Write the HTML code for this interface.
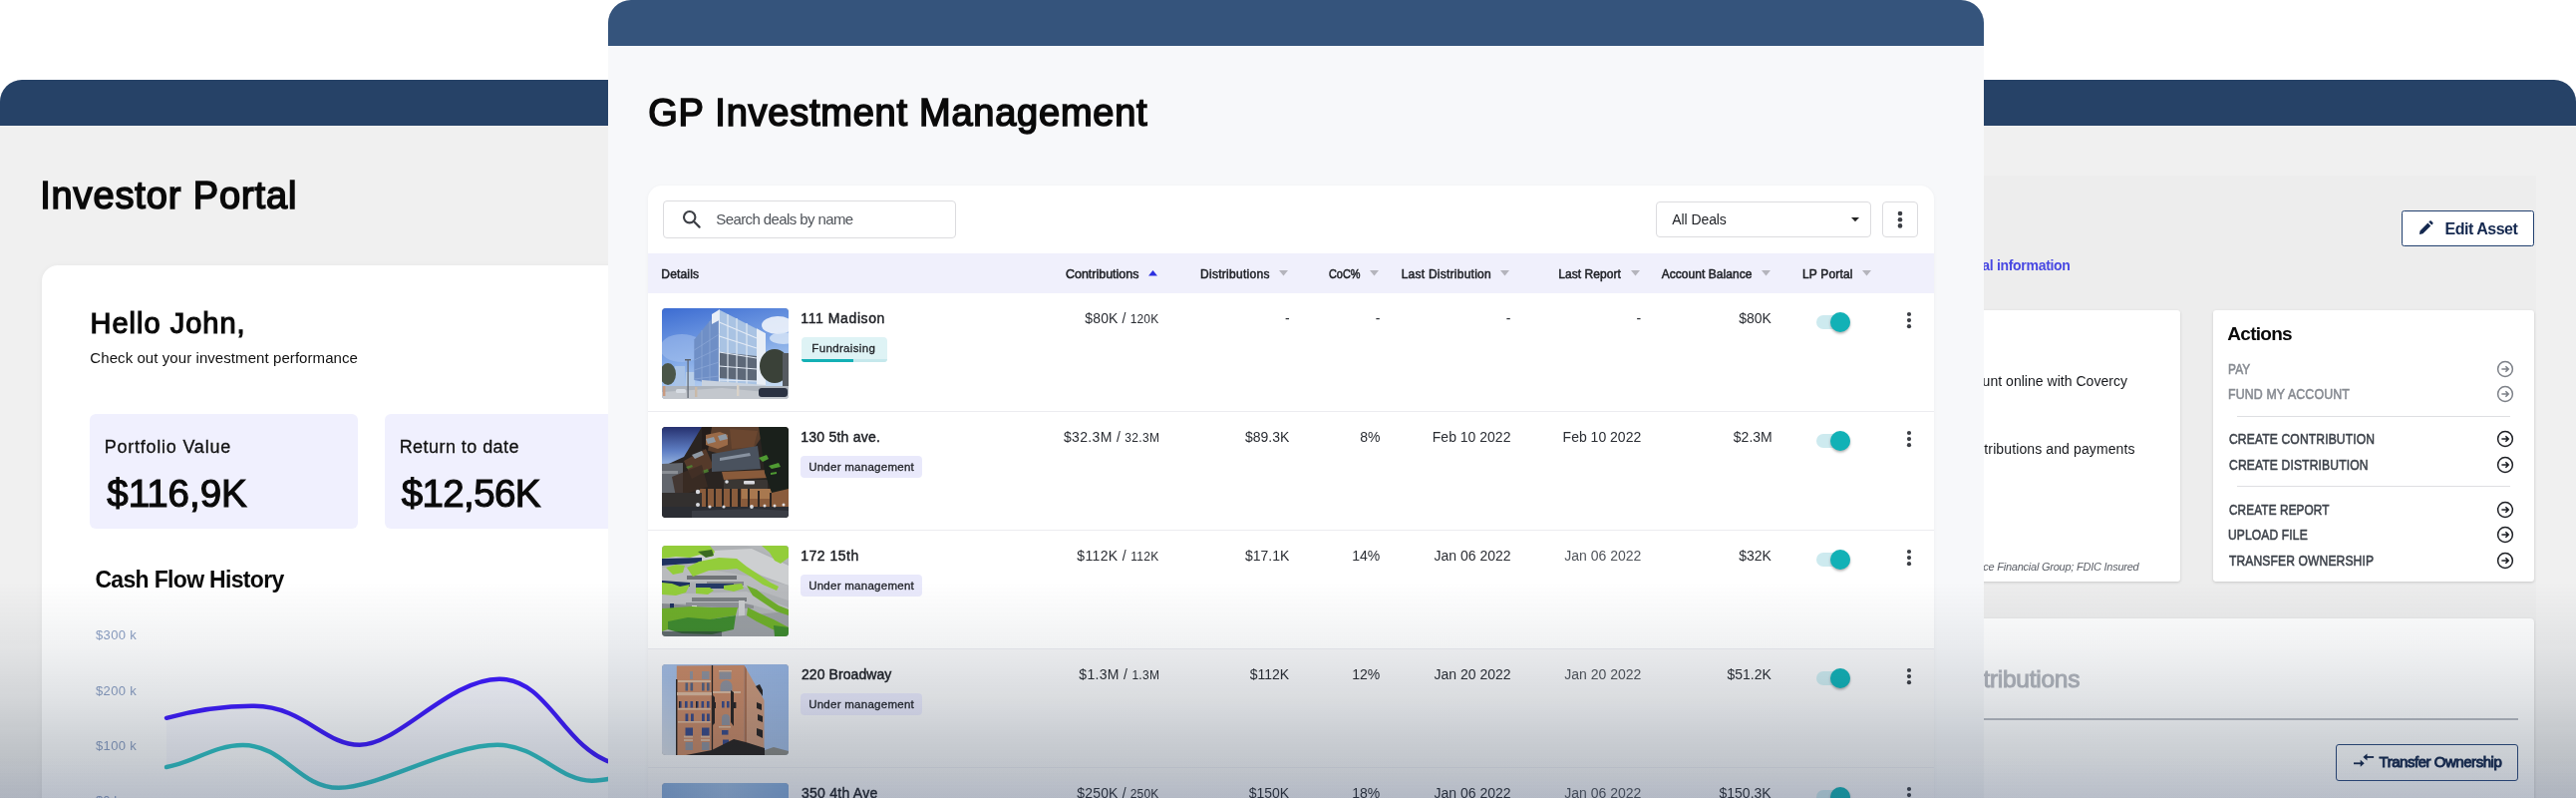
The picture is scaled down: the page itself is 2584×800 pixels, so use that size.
<!DOCTYPE html>
<html><head><meta charset="utf-8"><title>Covercy</title>
<style>
html,body{margin:0;padding:0;background:#fff;}
body{width:2584px;height:800px;overflow:hidden;position:relative;font-family:'Liberation Sans', sans-serif;-webkit-font-smoothing:antialiased;}
#root{position:absolute;left:0;top:0;width:2584px;height:800px;overflow:hidden;will-change:transform;}
#root span{display:block;}
.fd{position:absolute;pointer-events:none;}
</style></head><body><div id="root">
<!-- left: investor portal -->
<div style="position:absolute;left:0px;top:80px;width:700px;height:730px;background:#f0f0f0;border-radius:22px 0 0 0;"></div>
<div style="position:absolute;left:0px;top:80px;width:700px;height:46px;background:#264267;border-radius:22px 0 0 0;"></div>
<span style="position:absolute;left:40.13px;top:177.43px;font-size:38px;line-height:38px;color:#0a0a0a;white-space:pre;letter-spacing:0.874px;-webkit-text-stroke:1.6px #0a0a0a;">Investor Portal</span>
<div style="position:absolute;left:42px;top:266px;width:700px;height:560px;background:#fff;border-radius:16px 0 0 0;box-shadow:0 1px 6px rgba(0,0,0,.05);"></div>
<span style="position:absolute;left:90.53px;top:310.25px;font-size:29px;line-height:29px;color:#0a0a0a;white-space:pre;letter-spacing:1.007px;-webkit-text-stroke:1.2px #0a0a0a;">Hello John,</span>
<span style="position:absolute;left:90.33px;top:351.30px;font-size:15px;line-height:15px;color:#111;white-space:pre;letter-spacing:0.073px;">Check out your investment performance</span>
<div style="position:absolute;left:90px;top:415px;width:269px;height:115px;background:#f0f0fe;border-radius:6px;"></div>
<div style="position:absolute;left:386px;top:415px;width:269px;height:115px;background:#f0f0fe;border-radius:6px;"></div>
<span style="position:absolute;left:104.67px;top:439.26px;font-size:18px;line-height:18px;color:#111;white-space:pre;letter-spacing:0.774px;-webkit-text-stroke:0.3px #111;">Portfolio Value</span>
<span style="position:absolute;left:107.33px;top:476.21px;font-size:38.5px;line-height:38.5px;color:#0a0a0a;white-space:pre;letter-spacing:-0.028px;-webkit-text-stroke:1.15px #0a0a0a;">$116,9K</span>
<span style="position:absolute;left:400.67px;top:439.26px;font-size:18px;line-height:18px;color:#111;white-space:pre;letter-spacing:0.446px;-webkit-text-stroke:0.3px #111;">Return to date</span>
<span style="position:absolute;left:402.83px;top:476.21px;font-size:38.5px;line-height:38.5px;color:#0a0a0a;white-space:pre;letter-spacing:-0.656px;-webkit-text-stroke:1.15px #0a0a0a;">$12,56K</span>
<span style="position:absolute;left:95.40px;top:570.03px;font-size:23px;line-height:23px;color:#0a0a0a;white-space:pre;font-weight:700;letter-spacing:-0.671px;">Cash Flow History</span>
<span style="position:absolute;left:96.07px;top:630.30px;font-size:13px;line-height:13px;color:#8da0c4;white-space:pre;letter-spacing:0.327px;">$300 k</span>
<span style="position:absolute;left:96.07px;top:685.60px;font-size:13px;line-height:13px;color:#8da0c4;white-space:pre;letter-spacing:0.327px;">$200 k</span>
<span style="position:absolute;left:96.07px;top:740.80px;font-size:13px;line-height:13px;color:#8da0c4;white-space:pre;letter-spacing:0.327px;">$100 k</span>
<span style="position:absolute;left:96.07px;top:796.00px;font-size:13px;line-height:13px;color:#8da0c4;white-space:pre;">$0 k</span>
<svg style="position:absolute;left:0;top:600px" width="700" height="200" viewBox="0 600 700 200">
<path d="M167 719.8 C200 711,225 707.5,255 707.8 C305 708.3,325 746.8,360.8 746.8 C400 746.8,450 680.7,501 680.7 C550 680.7,565 750,615 765 L615 782 C600 783,597 782.7,593.7 782.7 C560 782.7,540 746.8,499 746.8 C450 746.8,380 789.8,339.7 789.8 C300 789.8,285 747,243.6 747 C215 747,195 764,167 769 Z" fill="#4a3fe0" fill-opacity=".03"/>
<path d="M167 719.8 C200 711,225 707.5,255 707.8 C305 708.3,325 746.8,360.8 746.8 C400 746.8,450 680.7,501 680.7 C550 680.7,565 750,615 765" fill="none" stroke="#3f1aff" stroke-width="4.4" stroke-linecap="round"/>
<path d="M167 769 C195 764,215 747,243.6 747 C285 747,300 789.8,339.7 789.8 C380 789.8,450 746.8,499 746.8 C540 746.8,560 782.7,593.7 782.7 C597 782.7,605 782,615 780" fill="none" stroke="#30c3c6" stroke-width="4.4" stroke-linecap="round"/>
</svg>
<!-- right: asset page -->
<div style="position:absolute;left:1900px;top:80px;width:684px;height:730px;background:#f0f0f0;border-radius:0 22px 0 0;"></div>
<div style="position:absolute;left:1900px;top:80px;width:684px;height:46px;background:#264267;border-radius:0 22px 0 0;"></div>
<div style="position:absolute;left:1900px;top:176px;width:644px;height:640px;background:#ededed;"></div>
<div style="position:absolute;left:2409px;top:211px;width:133px;height:36.4px;background:#fff;box-sizing:border-box;border:1.5px solid #22406f;border-radius:2.5px;"></div>
<svg style="position:absolute;left:2426.3px;top:220.6px" width="15" height="15" viewBox="0 0 16 16"><path d="M1 14.8l.6-3.7L10 2.7l3.1 3.1-8.4 8.4zM11 1.7l1.2-1.2c.4-.4 1-.4 1.4 0l1.7 1.7c.4.4.4 1 0 1.4l-1.2 1.2z" fill="#14284f"/></svg>
<span style="position:absolute;left:2452.60px;top:221.76px;font-size:16px;line-height:16px;color:#14284f;white-space:pre;font-weight:700;letter-spacing:-0.496px;">Edit Asset</span>
<span style="position:absolute;left:1988.27px;top:258.75px;font-size:14px;line-height:14px;color:#4848e2;white-space:pre;font-weight:700;letter-spacing:-0.303px;">al information</span>
<div style="position:absolute;left:1900px;top:311.3px;width:287.2px;height:271.5px;background:#fff;box-shadow:0 1px 3px rgba(0,0,0,.16);border-radius:3px;"></div>
<span style="position:absolute;left:1988.60px;top:374.75px;font-size:14px;line-height:14px;color:#16181c;white-space:pre;letter-spacing:0.029px;">unt online with Covercy</span>
<span style="position:absolute;left:1990.37px;top:442.55px;font-size:14px;line-height:14px;color:#16181c;white-space:pre;letter-spacing:0.114px;">tributions and payments</span>
<span style="position:absolute;left:1989.27px;top:563.29px;font-size:11px;line-height:11px;color:#5a5e66;white-space:pre;letter-spacing:-0.238px;font-style:italic;">ce Financial Group; FDIC Insured</span>
<div style="position:absolute;left:2219.6px;top:311.3px;width:322.6px;height:271.5px;background:#fff;box-shadow:0 1px 3px rgba(0,0,0,.16);border-radius:3px;"></div>
<span style="position:absolute;left:2234.33px;top:324.52px;font-size:19px;line-height:19px;color:#0a0a0a;white-space:pre;font-weight:700;letter-spacing:-0.722px;">Actions</span>
<span style="position:absolute;left:2235.15px;top:362.75px;font-size:14px;line-height:14px;color:#878b92;white-space:pre;letter-spacing:0.150px;-webkit-text-stroke:0.55px #878b92;transform:scaleX(0.8487);transform-origin:0 0;">PAY</span>
<svg style="position:absolute;left:2504.3px;top:360.6px" width="18" height="18" viewBox="0 0 18 18"><circle cx="9" cy="9" r="7.4" fill="none" stroke="#7d8188" stroke-width="1.5"/><path d="M5.4 9H12M9.4 6.2L12.2 9L9.4 11.8" fill="none" stroke="#7d8188" stroke-width="1.6" stroke-linejoin="miter"/></svg>
<span style="position:absolute;left:2235.12px;top:388.35px;font-size:14px;line-height:14px;color:#878b92;white-space:pre;letter-spacing:0.150px;-webkit-text-stroke:0.55px #878b92;transform:scaleX(0.8832);transform-origin:0 0;">FUND MY ACCOUNT</span>
<svg style="position:absolute;left:2504.3px;top:386.2px" width="18" height="18" viewBox="0 0 18 18"><circle cx="9" cy="9" r="7.4" fill="none" stroke="#7d8188" stroke-width="1.5"/><path d="M5.4 9H12M9.4 6.2L12.2 9L9.4 11.8" fill="none" stroke="#7d8188" stroke-width="1.6" stroke-linejoin="miter"/></svg>
<span style="position:absolute;left:2235.71px;top:433.15px;font-size:14px;line-height:14px;color:#3f444c;white-space:pre;letter-spacing:0.150px;-webkit-text-stroke:0.55px #3f444c;transform:scaleX(0.8648);transform-origin:0 0;">CREATE CONTRIBUTION</span>
<svg style="position:absolute;left:2504.3px;top:431px" width="18" height="18" viewBox="0 0 18 18"><circle cx="9" cy="9" r="7.4" fill="none" stroke="#1d1f24" stroke-width="1.5"/><path d="M5.4 9H12M9.4 6.2L12.2 9L9.4 11.8" fill="none" stroke="#1d1f24" stroke-width="1.6" stroke-linejoin="miter"/></svg>
<span style="position:absolute;left:2235.71px;top:458.95px;font-size:14px;line-height:14px;color:#3f444c;white-space:pre;letter-spacing:0.150px;-webkit-text-stroke:0.55px #3f444c;transform:scaleX(0.8656);transform-origin:0 0;">CREATE DISTRIBUTION</span>
<svg style="position:absolute;left:2504.3px;top:456.8px" width="18" height="18" viewBox="0 0 18 18"><circle cx="9" cy="9" r="7.4" fill="none" stroke="#1d1f24" stroke-width="1.5"/><path d="M5.4 9H12M9.4 6.2L12.2 9L9.4 11.8" fill="none" stroke="#1d1f24" stroke-width="1.6" stroke-linejoin="miter"/></svg>
<span style="position:absolute;left:2235.72px;top:503.75px;font-size:14px;line-height:14px;color:#3f444c;white-space:pre;letter-spacing:0.150px;-webkit-text-stroke:0.55px #3f444c;transform:scaleX(0.8405);transform-origin:0 0;">CREATE REPORT</span>
<svg style="position:absolute;left:2504.3px;top:501.6px" width="18" height="18" viewBox="0 0 18 18"><circle cx="9" cy="9" r="7.4" fill="none" stroke="#1d1f24" stroke-width="1.5"/><path d="M5.4 9H12M9.4 6.2L12.2 9L9.4 11.8" fill="none" stroke="#1d1f24" stroke-width="1.6" stroke-linejoin="miter"/></svg>
<span style="position:absolute;left:2235.43px;top:529.35px;font-size:14px;line-height:14px;color:#3f444c;white-space:pre;letter-spacing:0.150px;-webkit-text-stroke:0.55px #3f444c;transform:scaleX(0.8618);transform-origin:0 0;">UPLOAD FILE</span>
<svg style="position:absolute;left:2504.3px;top:527.2px" width="18" height="18" viewBox="0 0 18 18"><circle cx="9" cy="9" r="7.4" fill="none" stroke="#1d1f24" stroke-width="1.5"/><path d="M5.4 9H12M9.4 6.2L12.2 9L9.4 11.8" fill="none" stroke="#1d1f24" stroke-width="1.6" stroke-linejoin="miter"/></svg>
<span style="position:absolute;left:2236.00px;top:555.15px;font-size:14px;line-height:14px;color:#3f444c;white-space:pre;letter-spacing:0.150px;-webkit-text-stroke:0.55px #3f444c;transform:scaleX(0.8618);transform-origin:0 0;">TRANSFER OWNERSHIP</span>
<svg style="position:absolute;left:2504.3px;top:553px" width="18" height="18" viewBox="0 0 18 18"><circle cx="9" cy="9" r="7.4" fill="none" stroke="#1d1f24" stroke-width="1.5"/><path d="M5.4 9H12M9.4 6.2L12.2 9L9.4 11.8" fill="none" stroke="#1d1f24" stroke-width="1.6" stroke-linejoin="miter"/></svg>
<div style="position:absolute;left:2244px;top:417px;width:274px;height:1px;background:#dedfe2;"></div>
<div style="position:absolute;left:2244px;top:487px;width:274px;height:1px;background:#dedfe2;"></div>
<div style="position:absolute;left:1900px;top:619.7px;width:641.8px;height:200px;background:#fff;border-radius:4px;box-shadow:0 1px 3px rgba(0,0,0,.12);"></div>
<span style="position:absolute;left:1989.40px;top:668.76px;font-size:24.5px;line-height:24.5px;color:#b2b5bc;white-space:pre;letter-spacing:-0.267px;-webkit-text-stroke:1.0px #b2b5bc;">tributions</span>
<div style="position:absolute;left:1900px;top:720px;width:625.5px;height:1.6px;background:#b9bcc3;"></div>
<div style="position:absolute;left:2343px;top:745.8px;width:182.5px;height:37px;background:rgba(255,255,255,.12);box-sizing:border-box;border:1.5px solid #2c4a7e;border-radius:3px;"></div>
<svg style="position:absolute;left:2360px;top:754px" width="22" height="17" viewBox="0 0 22 17"><g fill="#14284f"><rect x="1" y="10.4" width="7.5" height="1.8"/><polygon points="7.7,7.8 11.7,11.3 7.7,14.8"/><rect x="13.8" y="4.1" width="7.3" height="1.8"/><polygon points="14.5,1.5 10.4,5 14.5,8.5"/></g></svg>
<span style="position:absolute;left:2386.60px;top:755.80px;font-size:15px;line-height:15px;color:#14284f;white-space:pre;letter-spacing:-0.471px;-webkit-text-stroke:0.95px #14284f;">Transfer Ownership</span>
<!-- center: GP investment management -->
<div style="position:absolute;left:610px;top:0px;width:1380px;height:810px;background:#f7f8fa;border-radius:23px 23px 0 0;"></div>
<div style="position:absolute;left:610px;top:0px;width:1380px;height:46px;background:#35547c;border-radius:23px 23px 0 0;"></div>
<span style="position:absolute;left:650.30px;top:94.03px;font-size:38px;line-height:38px;color:#0a0a0a;white-space:pre;letter-spacing:0.754px;-webkit-text-stroke:1.6px #0a0a0a;">GP Investment Management</span>
<div style="position:absolute;left:650px;top:186px;width:1290px;height:640px;background:#fff;border-radius:14px 14px 0 0;box-shadow:0 1px 5px rgba(0,0,0,.04);"></div>
<div style="position:absolute;left:665px;top:201px;width:294px;height:38px;background:#fff;box-sizing:border-box;border:1px solid #dcdcdf;border-radius:4px;"></div>
<svg style="position:absolute;left:684px;top:210px" width="20" height="20" viewBox="0 0 20 20"><circle cx="7.7" cy="7.7" r="5.7" fill="none" stroke="#3c3f45" stroke-width="2.1"/><path d="M12 12L17.6 17.6" stroke="#3c3f45" stroke-width="2.2" stroke-linecap="round"/></svg>
<span style="position:absolute;left:718.33px;top:211.70px;font-size:15px;line-height:15px;color:#50545a;white-space:pre;letter-spacing:-0.600px;">Search deals by name</span>
<div style="position:absolute;left:1661px;top:202px;width:216px;height:36px;background:#fff;box-sizing:border-box;border:1px solid #dcdcdf;border-radius:4px;"></div>
<span style="position:absolute;left:1677.30px;top:213.15px;font-size:14px;line-height:14px;color:#1d1f24;white-space:pre;letter-spacing:-0.083px;">All Deals</span>
<svg style="position:absolute;left:1856.5px;top:218.2px" width="8" height="4.2" viewBox="0 0 8 4.2"><polygon points="0,0 8,0 4,4.2" fill="#222"/></svg>
<div style="position:absolute;left:1888px;top:202px;width:36px;height:36px;background:#fff;box-sizing:border-box;border:1px solid #dcdcdf;border-radius:4px;"></div>
<svg style="position:absolute;left:1901.7px;top:209.8px" width="8" height="20.4" viewBox="0 0 8 20.4"><circle cx="4" cy="4.0" r="2.3" fill="#3c3f45"/><circle cx="4" cy="10.2" r="2.3" fill="#3c3f45"/><circle cx="4" cy="16.4" r="2.3" fill="#3c3f45"/></svg>
<div style="position:absolute;left:650px;top:254px;width:1290px;height:40.3px;background:#f0f0fc;"></div>
<span style="position:absolute;left:663.33px;top:269.14px;font-size:12px;line-height:12px;color:#1d1f24;white-space:pre;letter-spacing:0.167px;-webkit-text-stroke:0.5px #1d1f24;">Details</span>
<span style="position:absolute;left:1069.05px;top:269.14px;font-size:12px;line-height:12px;color:#1d1f24;white-space:pre;-webkit-text-stroke:0.5px #1d1f24;transform:scaleX(1.0379);transform-origin:0 0;">Contributions</span>
<svg style="position:absolute;left:1151.7px;top:271.4px" width="9" height="5.5" viewBox="0 0 9 5.5"><polygon points="0,5.5 9,5.5 4.5,0" fill="#2b2fe0"/></svg>
<span style="position:absolute;left:1204.03px;top:269.14px;font-size:12px;line-height:12px;color:#1d1f24;white-space:pre;letter-spacing:0.281px;-webkit-text-stroke:0.5px #1d1f24;">Distributions</span>
<svg style="position:absolute;left:1283px;top:271.4px" width="9" height="5.5" viewBox="0 0 9 5.5"><polygon points="0,0 9,0 4.5,5.5" fill="#b4b4bc"/></svg>
<span style="position:absolute;left:1332.50px;top:269.14px;font-size:12px;line-height:12px;color:#1d1f24;white-space:pre;-webkit-text-stroke:0.5px #1d1f24;transform:scaleX(0.9087);transform-origin:0 0;">CoC%</span>
<svg style="position:absolute;left:1373.5px;top:271.4px" width="9" height="5.5" viewBox="0 0 9 5.5"><polygon points="0,0 9,0 4.5,5.5" fill="#b4b4bc"/></svg>
<span style="position:absolute;left:1405.63px;top:269.14px;font-size:12px;line-height:12px;color:#1d1f24;white-space:pre;letter-spacing:0.250px;-webkit-text-stroke:0.5px #1d1f24;">Last Distribution</span>
<svg style="position:absolute;left:1504.5px;top:271.4px" width="9" height="5.5" viewBox="0 0 9 5.5"><polygon points="0,0 9,0 4.5,5.5" fill="#b4b4bc"/></svg>
<span style="position:absolute;left:1563.33px;top:269.14px;font-size:12px;line-height:12px;color:#1d1f24;white-space:pre;letter-spacing:0.053px;-webkit-text-stroke:0.5px #1d1f24;">Last Report</span>
<svg style="position:absolute;left:1635.6px;top:271.4px" width="9" height="5.5" viewBox="0 0 9 5.5"><polygon points="0,0 9,0 4.5,5.5" fill="#b4b4bc"/></svg>
<span style="position:absolute;left:1666.73px;top:269.14px;font-size:12px;line-height:12px;color:#1d1f24;white-space:pre;letter-spacing:0.048px;-webkit-text-stroke:0.5px #1d1f24;">Account Balance</span>
<svg style="position:absolute;left:1767px;top:271.4px" width="9" height="5.5" viewBox="0 0 9 5.5"><polygon points="0,0 9,0 4.5,5.5" fill="#b4b4bc"/></svg>
<span style="position:absolute;left:1807.93px;top:269.14px;font-size:12px;line-height:12px;color:#1d1f24;white-space:pre;letter-spacing:0.175px;-webkit-text-stroke:0.5px #1d1f24;">LP Portal</span>
<svg style="position:absolute;left:1867.5px;top:271.4px" width="9" height="5.5" viewBox="0 0 9 5.5"><polygon points="0,0 9,0 4.5,5.5" fill="#b4b4bc"/></svg>
<div style="position:absolute;left:650px;top:412px;width:1290px;height:1px;background:#ececf0;"></div>
<div style="position:absolute;left:664px;top:308.8px;width:127px;height:91px;border-radius:4px;overflow:hidden;background:#999"><svg width="127" height="91" viewBox="0 0 127 91" style="display:block"><defs><linearGradient id="s1" x1="0" y1="0" x2="0.3" y2="1"><stop offset="0" stop-color="#3c6cd2"/><stop offset=".55" stop-color="#7ea6e6"/><stop offset="1" stop-color="#c3d9f3"/></linearGradient></defs>
<rect width="127" height="91" fill="url(#s1)"/>
<ellipse cx="116" cy="17" rx="16" ry="9" fill="#eef3fb" opacity=".9"/><ellipse cx="122" cy="30" rx="14" ry="6" fill="#dbe7f7" opacity=".8"/><ellipse cx="20" cy="40" rx="22" ry="14" fill="#a9c4ee" opacity=".5"/>
<rect x="13" y="58" width="10" height="20" fill="#a9c3e6"/><rect x="24" y="64" width="9" height="14" fill="#b9cfe9"/>
<polygon points="57.4,1.5 32.3,31.6 32.3,72 57.4,77" fill="#6f8fc6"/>
<polygon points="57.4,1.5 50,6 50,16 57.4,12" fill="#e9eef6"/>
<polygon points="57.4,1.5 104,25.3 104,77 57.4,83" fill="#a9c3e3"/>
<polygon points="58,44 95,48 95,73 58,70" fill="#5d6878"/>
<polygon points="95,20.3 104,25.3 104,77 95,77" fill="#e8eef6"/>
<g stroke="#e4ebf5" stroke-width="1.1" fill="none"><path d="M57.4 1.5V83M66 6V81M75 10V80M85 15V79"/><path d="M57.4 14L95 30M57.4 28L95 40M57.4 44L95 50M57.4 58L95 61M57.4 72L95 73"/></g>
<g stroke="#8aa6d6" stroke-width=".8" fill="none"><path d="M32.3 42L57.4 26M32.3 52L57.4 40M32.3 62L57.4 54M32.3 71L57.4 68M40 22V73M48 13V75"/></g>
<polygon points="40,72 104,77 104,84 40,80" fill="#c9d2de"/>
<ellipse cx="113" cy="58" rx="15" ry="17" fill="#3a4138"/><ellipse cx="6" cy="66" rx="8" ry="11" fill="#4b5649"/>
<rect x="121" y="45" width="6" height="33" fill="#555a60"/>
<rect x="0" y="78" width="127" height="13" fill="#aeb4bc"/>
<polygon points="0,84 60,80 127,86 127,91 0,91" fill="#c3c7cd"/>
<rect x="97" y="80" width="29" height="9" rx="3" fill="#2b3242"/><rect x="14" y="81" width="10" height="4" rx="1.5" fill="#d8dde4"/>
<rect x="25.5" y="52" width="1.2" height="38" fill="#5a616b"/><rect x="23" y="51" width="6" height="1.5" fill="#5a616b"/>
<rect x="33" y="79" width="2.4" height="10" fill="#c9b9a8"/><rect x="75" y="77" width="2.4" height="11" fill="#d9d2c8"/><rect x="1" y="78" width="2.4" height="10" fill="#c99a80"/></svg></div>
<span style="position:absolute;left:803.30px;top:312.25px;font-size:14px;line-height:14px;color:#1d1f24;white-space:pre;letter-spacing:0.597px;-webkit-text-stroke:0.45px #1d1f24;">111 Madison</span>
<div style="position:absolute;left:803.5px;top:338px;width:86.5px;height:25px;background:#def3f5;border-radius:4px;overflow:hidden;"></div>
<div style="position:absolute;left:803.5px;top:360px;width:86.5px;height:3px;background:#c5e8ec;border-radius:0 0 4px 4px;"></div>
<div style="position:absolute;left:803.5px;top:360px;width:52px;height:3px;background:#14b0b5;border-radius:0 0 0 4px;"></div>
<span style="position:absolute;left:814.33px;top:344.27px;font-size:11.5px;line-height:11.5px;color:#1d1f24;white-space:pre;letter-spacing:0.350px;-webkit-text-stroke:0.3px #1d1f24;">Fundraising</span>
<span style="position:absolute;left:1088.33px;top:311.55px;font-size:14px;line-height:14px;color:#2a2d33;white-space:pre;letter-spacing:0.140px;">$80K / <b style="font-weight:400;font-size:12px">120K</b></span>
<span style="position:absolute;left:1289.00px;top:311.55px;font-size:14px;line-height:14px;color:#2a2d33;white-space:pre;">-</span>
<span style="position:absolute;left:1379.80px;top:311.55px;font-size:14px;line-height:14px;color:#2a2d33;white-space:pre;">-</span>
<span style="position:absolute;left:1510.80px;top:311.55px;font-size:14px;line-height:14px;color:#2a2d33;white-space:pre;">-</span>
<span style="position:absolute;left:1641.60px;top:311.55px;font-size:14px;line-height:14px;color:#2a2d33;white-space:pre;">-</span>
<span style="position:absolute;left:1744.17px;top:311.55px;font-size:14px;line-height:14px;color:#2a2d33;white-space:pre;">$80K</span>
<div style="position:absolute;left:1822px;top:316.25px;width:34px;height:13.5px;background:#cdeaef;border-radius:7px;"></div><div style="position:absolute;left:1836.3px;top:313px;width:20px;height:20px;background:#12b1b6;border-radius:50%;box-shadow:0 1.5px 2.5px rgba(0,0,0,.3);"></div>
<svg style="position:absolute;left:1911px;top:310.9px" width="8" height="20.2" viewBox="0 0 8 20.2"><circle cx="4" cy="4.0" r="2.1" fill="#3c3f45"/><circle cx="4" cy="10.1" r="2.1" fill="#3c3f45"/><circle cx="4" cy="16.2" r="2.1" fill="#3c3f45"/></svg>
<div style="position:absolute;left:650px;top:531px;width:1290px;height:1px;background:#ececf0;"></div>
<div style="position:absolute;left:664px;top:427.8px;width:127px;height:91px;border-radius:4px;overflow:hidden;background:#999"><svg width="127" height="91" viewBox="0 0 127 91" style="display:block"><defs><linearGradient id="s2" x1="0" y1="0" x2="0" y2="1"><stop offset="0" stop-color="#26316f"/><stop offset=".6" stop-color="#5f7fc4"/><stop offset="1" stop-color="#9bb8e2"/></linearGradient></defs>
<rect width="127" height="91" fill="#2a2421"/>
<polygon points="0,0 40,0 22,30 0,40" fill="url(#s2)"/>
<polygon points="0,37 21,36 21,66 0,66" fill="#62666d"/><rect x="0" y="44" width="16" height="3" fill="#8a8e94"/>
<polygon points="40,0 98,0 100,10 92,22 62,28 40,22" fill="#5a3e2c"/><polygon points="40,0 50,0 46,24 40,22" fill="#241d1a"/><polygon points="68,2 96,4 92,20 70,22" fill="#6b4730"/>
<polygon points="44,8 58,5 66,8 66,18 56,22 44,18" fill="#9a6a47"/><polygon points="56,9 64,7 66,12 58,14" fill="#8e99a4"/><polygon points="44,12 52,10 54,15 46,17" fill="#8e99a4"/>
<polygon points="22,34 44,22 52,40 30,52" fill="#553a2a"/><polygon points="30,28 40,24 42,28 33,32" fill="#8e99a4"/>
<polygon points="50,27 96,19 99,42 50,45" fill="#4a525e"/><polygon points="58,31 88,26 89,29 58,34" fill="#8892a0"/>
<polygon points="60,45 107,43 107,51 62,53" fill="#8a5b3b"/>
<rect x="38" y="62" width="89" height="18" fill="#8a5c3c"/><rect x="80" y="62" width="30" height="10" fill="#a8784f"/>
<g fill="#2a2421"><rect x="44" y="62" width="2" height="18"/><rect x="52" y="62" width="2" height="18"/><rect x="60" y="62" width="2" height="18"/><rect x="68" y="62" width="2" height="18"/><rect x="76" y="62" width="3" height="18"/><rect x="86" y="62" width="2" height="18"/><rect x="96" y="64" width="2" height="16"/><rect x="108" y="66" width="2" height="14"/></g>
<rect x="62" y="53" width="44" height="9" fill="#3a3633"/><rect x="82" y="54" width="11" height="3.4" rx="1" fill="#d8d8dc"/>
<polygon points="97,0 127,0 127,62 110,66 103,46 100,20" fill="#1a201b"/>
<path d="M97 31l8-3 2 4-6 3zM107 39l10-3 2 4-9 2zM109 46l6-1v2l-6 1z" fill="#4f9a32"/>
<path d="M40 44l6-2 1 3-6 2zM24 40l6-2 1 2-5 2z" fill="#4f8a32" opacity=".8"/>
<polygon points="10,50 40,38 46,60 14,70" fill="#3d2d24" opacity=".8"/>
<rect x="0" y="66" width="40" height="14" fill="#33302f"/>
<rect x="0" y="80" width="127" height="11" fill="#2b2d33"/><polygon points="30,84 90,82 127,84 127,91 30,91" fill="#3a3d44"/>
<g fill="#e9ecf2" opacity=".9"><circle cx="36" cy="65" r="2.2"/><circle cx="65" cy="55" r="1.8"/><circle cx="48" cy="80" r="1.6"/><circle cx="62" cy="80" r="1.6"/><circle cx="90" cy="80" r="1.9"/><circle cx="103" cy="79" r="1.5"/><circle cx="113" cy="79" r="1.5"/><circle cx="122" cy="78" r="1.5"/><circle cx="36" cy="78" r="2"/></g></svg></div>
<span style="position:absolute;left:803.30px;top:431.25px;font-size:14px;line-height:14px;color:#1d1f24;white-space:pre;letter-spacing:0.227px;-webkit-text-stroke:0.45px #1d1f24;">130 5th ave.</span>
<div style="position:absolute;left:803px;top:457px;width:122px;height:22px;background:#e9e9fb;border-radius:4px;"></div>
<span style="position:absolute;left:811.13px;top:463.27px;font-size:11.5px;line-height:11.5px;color:#1d1f24;white-space:pre;letter-spacing:0.267px;-webkit-text-stroke:0.3px #1d1f24;">Under management</span>
<span style="position:absolute;left:1067.00px;top:430.55px;font-size:14px;line-height:14px;color:#2a2d33;white-space:pre;letter-spacing:0.328px;">$32.3M / <b style="font-weight:400;font-size:12px">32.3M</b></span>
<span style="position:absolute;left:1249.00px;top:430.55px;font-size:14px;line-height:14px;color:#2a2d33;white-space:pre;">$89.3K</span>
<span style="position:absolute;left:1364.13px;top:430.55px;font-size:14px;line-height:14px;color:#2a2d33;white-space:pre;">8%</span>
<span style="position:absolute;left:1436.80px;top:430.55px;font-size:14px;line-height:14px;color:#2a2d33;white-space:pre;">Feb 10 2022</span>
<span style="position:absolute;left:1567.60px;top:430.55px;font-size:14px;line-height:14px;color:#2a2d33;white-space:pre;">Feb 10 2022</span>
<span style="position:absolute;left:1738.83px;top:430.55px;font-size:14px;line-height:14px;color:#2a2d33;white-space:pre;">$2.3M</span>
<div style="position:absolute;left:1822px;top:435.25px;width:34px;height:13.5px;background:#cdeaef;border-radius:7px;"></div><div style="position:absolute;left:1836.3px;top:432px;width:20px;height:20px;background:#12b1b6;border-radius:50%;box-shadow:0 1.5px 2.5px rgba(0,0,0,.3);"></div>
<svg style="position:absolute;left:1911px;top:429.9px" width="8" height="20.2" viewBox="0 0 8 20.2"><circle cx="4" cy="4.0" r="2.1" fill="#3c3f45"/><circle cx="4" cy="10.1" r="2.1" fill="#3c3f45"/><circle cx="4" cy="16.2" r="2.1" fill="#3c3f45"/></svg>
<div style="position:absolute;left:650px;top:650px;width:1290px;height:1px;background:#ececf0;"></div>
<div style="position:absolute;left:664px;top:546.8px;width:127px;height:91px;border-radius:4px;overflow:hidden;background:#999"><svg width="127" height="91" viewBox="0 0 127 91" style="display:block"><rect width="127" height="91" fill="#aeb1b4"/>
<polygon points="0,9 50,5 90,3 127,20 127,40 100,30 80,20 50,16 0,20" fill="#cdcfd1"/>
<polygon points="85,0 127,0 127,18 100,6" fill="#b3b6b9"/>
<polygon points="0,13 40,12 40,17 0,20" fill="#1e3160"/>
<polygon points="0,22 30,22 60,26 95,32 127,40 127,55 100,46 70,38 40,36 0,38" fill="#b9bbbe"/>
<polygon points="25,30 75,30 75,34 25,34" fill="#6f7377"/><polygon points="45,36 82,36 82,40 45,40" fill="#85888c"/>
<polygon points="0,35 28,37 28,41 0,41" fill="#1e3160"/><polygon points="34,38 72,38 72,43 34,43" fill="#263a66"/>
<polygon points="0,48 30,48 85,46 100,52 127,62 127,70 100,62 85,58 0,58" fill="#bcbec1"/>
<polygon points="30,52 85,52 85,56 30,56" fill="#7b7f83"/><polygon points="24,57 78,57 92,60 92,63 24,61" fill="#8f9296"/>
<polygon points="0,58 30,60 30,64 0,64" fill="#8a8d91"/><rect x="8" y="58" width="4" height="6" fill="#1e3160"/>
<rect x="77" y="55" width="6" height="20" fill="#c9cbcd"/><rect x="30" y="60" width="5" height="8" fill="#d9dadc"/>
<polygon points="60,72 127,66 127,91 60,91" fill="#9b9fa3"/>
<g fill="#93cd3a"><path d="M0 0h48l5 6-3 5-12-2-10 3-14-1-14 2z"/><path d="M100 0h27v12l-8 6-6-3-5-8z"/><path d="M4 22l10-3 9 1-2 7-10 2z"/><path d="M25 22l12-6 20-4 18 1 10 8 12 8 12 8 8 4-2 4-14-6-12-8-14-8-10 1-18 1-16 6z"/><path d="M0 37l10 1 8 3 10-2-4 8-10 3-14-1z"/><path d="M34 42l14 0 4 3-6 4-12-1zM62 40l18-2 2 5-10 3-10-2z"/></g>
<g fill="#6fae2a"><path d="M85 40l10 4 10 8 12 8 10 4v6l-12-4-12-8-12-8z"/><path d="M0 63l30-2 20 1 26 0-2 8-20 3-22 6-20 3-12 4z"/><path d="M86 62l12 6 14 6 15 8v6l-16-4-16-8-10-6z"/></g>
<g fill="#3f8a2e"><path d="M6 76l20-4 22 2 26-4-2 14-22 5-30-1-14-4z"/><path d="M112 80l15 2v9h-14z"/></g>
<path d="M36 6l14-2 2 6-8 2z" fill="#3b6a22"/>
<rect x="0" y="86" width="60" height="5" fill="#2c3a3a" opacity=".6"/></svg></div>
<span style="position:absolute;left:803.30px;top:550.25px;font-size:14px;line-height:14px;color:#1d1f24;white-space:pre;letter-spacing:0.500px;-webkit-text-stroke:0.45px #1d1f24;">172 15th</span>
<div style="position:absolute;left:803px;top:576px;width:122px;height:22px;background:#e9e9fb;border-radius:4px;"></div>
<span style="position:absolute;left:811.13px;top:582.27px;font-size:11.5px;line-height:11.5px;color:#1d1f24;white-space:pre;letter-spacing:0.267px;-webkit-text-stroke:0.3px #1d1f24;">Under management</span>
<span style="position:absolute;left:1080.33px;top:549.55px;font-size:14px;line-height:14px;color:#2a2d33;white-space:pre;letter-spacing:0.339px;">$112K / <b style="font-weight:400;font-size:12px">112K</b></span>
<span style="position:absolute;left:1249.00px;top:549.55px;font-size:14px;line-height:14px;color:#2a2d33;white-space:pre;">$17.1K</span>
<span style="position:absolute;left:1356.13px;top:549.55px;font-size:14px;line-height:14px;color:#2a2d33;white-space:pre;">14%</span>
<span style="position:absolute;left:1438.47px;top:549.55px;font-size:14px;line-height:14px;color:#2a2d33;white-space:pre;">Jan 06 2022</span>
<span style="position:absolute;left:1569.27px;top:549.55px;font-size:14px;line-height:14px;color:#50545a;white-space:pre;">Jan 06 2022</span>
<span style="position:absolute;left:1744.17px;top:549.55px;font-size:14px;line-height:14px;color:#2a2d33;white-space:pre;">$32K</span>
<div style="position:absolute;left:1822px;top:554.25px;width:34px;height:13.5px;background:#cdeaef;border-radius:7px;"></div><div style="position:absolute;left:1836.3px;top:551px;width:20px;height:20px;background:#12b1b6;border-radius:50%;box-shadow:0 1.5px 2.5px rgba(0,0,0,.3);"></div>
<svg style="position:absolute;left:1911px;top:548.9px" width="8" height="20.2" viewBox="0 0 8 20.2"><circle cx="4" cy="4.0" r="2.1" fill="#3c3f45"/><circle cx="4" cy="10.1" r="2.1" fill="#3c3f45"/><circle cx="4" cy="16.2" r="2.1" fill="#3c3f45"/></svg>
<div style="position:absolute;left:650px;top:651px;width:1290px;height:119px;background:#f8f8f9;"></div>
<div style="position:absolute;left:650px;top:769px;width:1290px;height:1px;background:#ececf0;"></div>
<div style="position:absolute;left:664px;top:665.8px;width:127px;height:91px;border-radius:4px;overflow:hidden;background:#999"><svg width="127" height="91" viewBox="0 0 127 91" style="display:block"><defs><linearGradient id="s4" x1="1" y1="0" x2="0" y2="1"><stop offset="0" stop-color="#94b1de"/><stop offset=".55" stop-color="#a3bbe0"/><stop offset="1" stop-color="#d6dbe3"/></linearGradient></defs>
<rect width="127" height="91" fill="url(#s4)"/>
<polygon points="14.8,1.6 82.5,1 82.5,91 14.8,91" fill="#c68866"/>
<polygon points="82.5,1 102.5,36 102.5,91 82.5,91" fill="#c9977a"/>
<polygon points="82.5,1 85,5 85,91 82.5,91" fill="#a76f52"/>
<rect x="14" y="15" width="1.4" height="76" fill="#2a2422"/>
<rect x="49.8" y="1" width="1.3" height="90" fill="#2a2422"/>
<g fill="#d7b69c"><rect x="16" y="16" width="33" height="2"/><rect x="15" y="28" width="35" height="3.2"/><rect x="51" y="27" width="28" height="2"/><rect x="16" y="44" width="33" height="1.6"/><rect x="16" y="57" width="33" height="1.6"/><rect x="22" y="71.5" width="9" height="2"/><rect x="39" y="71.5" width="9" height="2"/><rect x="22" y="75" width="9" height="2"/><rect x="39" y="75" width="9" height="2"/><rect x="57" y="6" width="13" height="1.6"/><rect x="57" y="62" width="12" height="1.6"/></g>
<g fill="#8d8f9a"><rect x="28" y="7" width="3" height="8"/><rect x="40" y="7" width="7.5" height="8"/><rect x="57.5" y="7.5" width="12" height="7.5"/><path d="M58.5 27v-5a6 6 0 0 1 12 0v5z"/><path d="M60 61v-7a4 4 0 0 1 8 0v7z"/></g>
<g fill="#55617f"><rect x="23.5" y="18.5" width="2.6" height="8"/><rect x="28.5" y="18.5" width="2.6" height="8"/><rect x="40" y="18.5" width="2.6" height="8"/><rect x="45" y="18.5" width="2.6" height="8"/></g>
<g fill="#3a4a86"><rect x="17" y="37" width="2.6" height="6.5"/><rect x="23" y="37" width="2.6" height="6.5"/><rect x="28.5" y="37" width="2.6" height="6.5"/><rect x="34" y="37" width="2.6" height="6.5"/><rect x="39.5" y="37" width="2.6" height="6.5"/><rect x="45" y="37" width="2.6" height="6.5"/><rect x="60" y="37" width="2.6" height="6.5"/><rect x="65" y="37" width="2.6" height="6.5"/>
<rect x="23.5" y="49.5" width="2.8" height="7.5"/><rect x="29" y="49.5" width="2.8" height="7.5"/><rect x="40" y="49.5" width="2.8" height="7.5"/><rect x="45" y="49.5" width="2.8" height="7.5"/>
<rect x="23.5" y="63.5" width="7.5" height="8"/><rect x="40" y="63.5" width="7.5" height="8"/><rect x="60" y="66" width="6.5" height="4.6"/><rect x="61" y="75.5" width="6" height="9.5"/></g>
<g fill="#8d8f9a"><rect x="23.5" y="78" width="7.5" height="8"/><rect x="40" y="78" width="7.5" height="8"/></g>
<g fill="#2a2422"><rect x="17" y="37" width="1.2" height="6.5"/><rect x="34" y="37" width="1.4" height="6.5"/><rect x="52" y="38" width="2" height="6"/><rect x="72" y="38" width="2.4" height="6"/><path d="M50 30l3 3v26l-3 3z"/><path d="M69 26l3 2v34l-3-4z"/><path d="M94 22l4-2 3 6v6z"/><path d="M95 38l5 2v6l-5-2zM96 50l5 2v6l-5-2zM95 64l6 2v8l-6-3z"/></g>
<polygon points="24,91 50,86 72,75 84,78 103,84 103,91" fill="#2a2422"/>
<polygon points="103,86 112,83 127,87 127,91 103,91" fill="#8a8a86"/></svg></div>
<span style="position:absolute;left:803.97px;top:669.25px;font-size:14px;line-height:14px;color:#1d1f24;white-space:pre;letter-spacing:0.079px;-webkit-text-stroke:0.45px #1d1f24;">220 Broadway</span>
<div style="position:absolute;left:803px;top:695px;width:122px;height:22px;background:#e9e9fb;border-radius:4px;"></div>
<span style="position:absolute;left:811.13px;top:701.27px;font-size:11.5px;line-height:11.5px;color:#1d1f24;white-space:pre;letter-spacing:0.267px;-webkit-text-stroke:0.3px #1d1f24;">Under management</span>
<span style="position:absolute;left:1082.33px;top:668.55px;font-size:14px;line-height:14px;color:#2a2d33;white-space:pre;letter-spacing:0.309px;">$1.3M / <b style="font-weight:400;font-size:12px">1.3M</b></span>
<span style="position:absolute;left:1253.67px;top:668.55px;font-size:14px;line-height:14px;color:#2a2d33;white-space:pre;">$112K</span>
<span style="position:absolute;left:1356.13px;top:668.55px;font-size:14px;line-height:14px;color:#2a2d33;white-space:pre;">12%</span>
<span style="position:absolute;left:1438.47px;top:668.55px;font-size:14px;line-height:14px;color:#2a2d33;white-space:pre;">Jan 20 2022</span>
<span style="position:absolute;left:1569.27px;top:668.55px;font-size:14px;line-height:14px;color:#50545a;white-space:pre;">Jan 20 2022</span>
<span style="position:absolute;left:1732.50px;top:668.55px;font-size:14px;line-height:14px;color:#2a2d33;white-space:pre;">$51.2K</span>
<div style="position:absolute;left:1822px;top:673.25px;width:34px;height:13.5px;background:#cdeaef;border-radius:7px;"></div><div style="position:absolute;left:1836.3px;top:670px;width:20px;height:20px;background:#12b1b6;border-radius:50%;box-shadow:0 1.5px 2.5px rgba(0,0,0,.3);"></div>
<svg style="position:absolute;left:1911px;top:667.9px" width="8" height="20.2" viewBox="0 0 8 20.2"><circle cx="4" cy="4.0" r="2.1" fill="#3c3f45"/><circle cx="4" cy="10.1" r="2.1" fill="#3c3f45"/><circle cx="4" cy="16.2" r="2.1" fill="#3c3f45"/></svg>
<div style="position:absolute;left:650px;top:770px;width:1290px;height:119px;background:#f8f8f9;"></div>
<div style="position:absolute;left:650px;top:888px;width:1290px;height:1px;background:#ececf0;"></div>
<div style="position:absolute;left:664px;top:784.8px;width:127px;height:91px;border-radius:4px;overflow:hidden;background:#999"><svg width="127" height="91" viewBox="0 0 127 91" style="display:block"><defs><linearGradient id="s5" x1="0" y1="0" x2="1" y2="0"><stop offset="0" stop-color="#86abd9"/><stop offset=".5" stop-color="#9cbbe0"/><stop offset="1" stop-color="#84abdb"/></linearGradient></defs><rect width="127" height="91" fill="url(#s5)"/></svg></div>
<span style="position:absolute;left:803.97px;top:788.25px;font-size:14px;line-height:14px;color:#1d1f24;white-space:pre;letter-spacing:0.250px;-webkit-text-stroke:0.45px #1d1f24;">350 4th Ave</span>
<div style="position:absolute;left:803px;top:814px;width:122px;height:22px;background:#e9e9fb;border-radius:4px;"></div>
<span style="position:absolute;left:811.13px;top:820.27px;font-size:11.5px;line-height:11.5px;color:#1d1f24;white-space:pre;letter-spacing:0.267px;-webkit-text-stroke:0.3px #1d1f24;">Under management</span>
<span style="position:absolute;left:1080.33px;top:787.55px;font-size:14px;line-height:14px;color:#2a2d33;white-space:pre;letter-spacing:0.158px;">$250K / <b style="font-weight:400;font-size:12px">250K</b></span>
<span style="position:absolute;left:1252.67px;top:787.55px;font-size:14px;line-height:14px;color:#2a2d33;white-space:pre;">$150K</span>
<span style="position:absolute;left:1356.13px;top:787.55px;font-size:14px;line-height:14px;color:#2a2d33;white-space:pre;">18%</span>
<span style="position:absolute;left:1438.47px;top:787.55px;font-size:14px;line-height:14px;color:#2a2d33;white-space:pre;">Jan 06 2022</span>
<span style="position:absolute;left:1569.27px;top:787.55px;font-size:14px;line-height:14px;color:#50545a;white-space:pre;">Jan 06 2022</span>
<span style="position:absolute;left:1724.50px;top:787.55px;font-size:14px;line-height:14px;color:#2a2d33;white-space:pre;">$150.3K</span>
<div style="position:absolute;left:1822px;top:792.25px;width:34px;height:13.5px;background:#cdeaef;border-radius:7px;"></div><div style="position:absolute;left:1836.3px;top:789px;width:20px;height:20px;background:#12b1b6;border-radius:50%;box-shadow:0 1.5px 2.5px rgba(0,0,0,.3);"></div>
<svg style="position:absolute;left:1911px;top:786.9px" width="8" height="20.2" viewBox="0 0 8 20.2"><circle cx="4" cy="4.0" r="2.1" fill="#3c3f45"/><circle cx="4" cy="10.1" r="2.1" fill="#3c3f45"/><circle cx="4" cy="16.2" r="2.1" fill="#3c3f45"/></svg>
<div class="fd" style="left:0;top:583px;width:2584px;height:217px;background:linear-gradient(to bottom,rgba(23,41,62,0) 0%,rgba(23,41,62,.062) 30%,rgba(23,41,62,.135) 54%,rgba(23,41,62,.203) 72%,rgba(23,41,62,.285) 100%)"></div>
<div class="fd" style="left:0;top:758px;width:2584px;height:42px;background:linear-gradient(to bottom,rgba(120,130,220,0),rgba(120,130,220,.06))"></div>
</div></body></html>
